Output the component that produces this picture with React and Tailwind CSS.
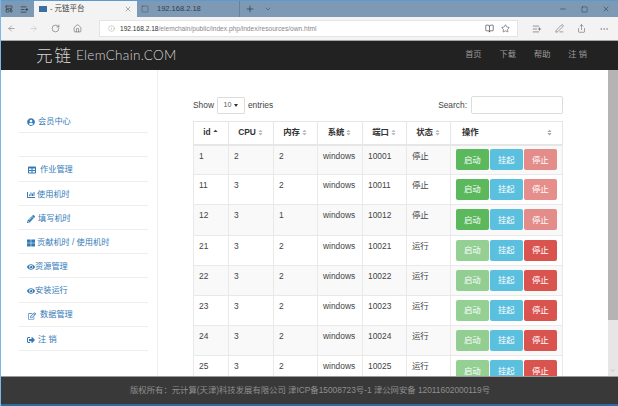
import React from "react";
import { ArrowLeft, ArrowRight, RotateCw, Home, Info, BookOpen, Star, PenLine, Share, MoreHorizontal, Plus, ChevronDown, X, Minus, Square, ListPlus, LayoutTemplate } from "lucide-react";
import { FaUserCircle, FaTable, FaChartBar, FaPencilAlt, FaThLarge, FaEye, FaRegEdit, FaSignOutAlt, FaSort, FaSortUp } from "react-icons/fa";

const sans = "font-['Liberation_Sans','Noto_Sans_CJK_SC',sans-serif]";

const menu = [
  { icon: FaTable, label: "作业管理", cls: "ml-[1px] mr-[4px]" },
  { icon: FaChartBar, label: "使用机时", cls: "mr-[2px]" },
  { icon: FaPencilAlt, label: "填写机时", cls: "mr-[3px]" },
  { icon: FaThLarge, label: "贡献机时 / 使用机时", cls: "mr-[2px]" },
  { icon: FaEye, label: "资源管理", cls: "" },
  { icon: FaEye, label: "安装运行", cls: "" },
  { icon: FaRegEdit, label: "数据管理", cls: "ml-[1px] mr-[4px]" },
  { icon: FaSignOutAlt, label: "注 销", cls: "mr-[3px]" },
];

const rows = [
  ["1", "2", "2", "10001", "停止", false],
  ["11", "3", "2", "10011", "停止", false],
  ["12", "3", "1", "10012", "停止", false],
  ["21", "3", "2", "10021", "运行", true],
  ["22", "3", "2", "10022", "运行", true],
  ["23", "3", "2", "10023", "运行", true],
  ["24", "3", "2", "10024", "运行", true],
  ["25", "3", "2", "10025", "运行", true],
];

const heads = [
  ["id", "w-[35px]", true],
  ["CPU", "w-[45px]"],
  ["内存", "w-[44px]"],
  ["系统", "w-[45px]"],
  ["端口", "w-[44px]"],
  ["状态", "w-[44px]"],
];

const cell = "border border-[#e9e9e9] px-[5px] pt-[4px] align-top";

function Btn({ color, dim, children }) {
  return (
    <span className={`flex h-[21px] w-[32.5px] items-center justify-center rounded-[2px] text-[8.4px] text-white ${color} ${dim ? "opacity-65" : ""}`}>
      {children}
    </span>
  );
}

export default function App() {
  return (
    <div className={`flex h-[406px] w-[618px] flex-col overflow-hidden border-l border-l-[#7ab6e6] bg-white ${sans}`}>
      {/* tab strip */}
      <div className="flex h-[17px] shrink-0 items-end border-t border-t-[#5c9bd1] bg-[#7e99b3] text-[#333]">
        <div className="flex h-full w-[33px] items-center gap-[7px] pl-[4px]">
          <LayoutTemplate size={8} strokeWidth={1.6} className="text-[#222]" />
          <ListPlus size={9} strokeWidth={1.6} className="text-[#222]" />
        </div>
        <div className="flex h-[16px] w-[103px] items-center bg-[#f3f3f3] pl-[5px] pr-[5px] text-[7.5px]">
          <span className="mr-[3px] h-[6px] w-[8px] bg-[#3a6ea5]" />
          <span className="flex-1 text-[#444]">- 元链平台</span>
          <X size={8} strokeWidth={1.4} className="text-[#555]" />
        </div>
        <div className="flex h-[16px] w-[103px] items-center border-r border-r-[#66829c] pl-[3px] text-[7.5px] text-[#2e3f4f]">
          <Square size={8} strokeWidth={1.2} className="mr-[8px] ml-[1px] text-[#2e3f4f]" />
          <span>192.168.2.18</span>
        </div>
        <div className="flex h-[16px] items-center gap-[9px] pl-[5px]">
          <Plus size={10} strokeWidth={1.5} className="text-[#1e2a36]" />
          <ChevronDown size={8} strokeWidth={1.5} className="text-[#33475a]" />
        </div>
        <div className="ml-auto flex h-[16px] items-center gap-[14px] pr-[8px] text-[#1e2a36]">
          <Minus size={8} strokeWidth={1.4} />
          <Square size={7} strokeWidth={1.4} />
          <X size={8} strokeWidth={1.4} />
        </div>
      </div>

      {/* browser toolbar */}
      <div className="flex h-[23px] shrink-0 items-center bg-[#f3f3f3] text-[#666]">
        <div className="flex w-[98px] items-center gap-[13px] pl-[6px]">
          <ArrowLeft size={9} strokeWidth={1.4} className="text-[#666]" />
          <ArrowRight size={9} strokeWidth={1.4} className="text-[#bbb]" />
          <RotateCw size={9} strokeWidth={1.4} className="text-[#555]" />
          <Home size={9} strokeWidth={1.4} className="text-[#555]" />
        </div>
        <div className="flex h-[17px] w-[419px] items-center border border-[#e4e4e4] bg-white pl-[8px] pr-[7px]">
          <Info size={7} strokeWidth={1.2} className="mr-[5px] text-[#888]" />
          <span className="text-[6.6px] text-[#333]">192.168.2.18</span>
          <span className="text-[6.6px] text-[#888]">/elemchain/public/index.php/index/resources/own.html</span>
          <BookOpen size={9} strokeWidth={1.6} className="ml-auto mr-[7px] text-[#333]" />
          <Star size={9} strokeWidth={1.4} className="text-[#333]" />
        </div>
        <div className="flex items-center gap-[13px] pl-[14px]">
          <ListPlus size={10} strokeWidth={1.3} className="text-[#444]" />
          <PenLine size={9} strokeWidth={1.3} className="text-[#444]" />
          <Share size={9} strokeWidth={1.3} className="text-[#444]" />
          <MoreHorizontal size={10} strokeWidth={1.3} className="text-[#777]" />
        </div>
      </div>

      {/* site nav */}
      <div className="flex h-[30px] shrink-0 items-center border-t border-t-[#a8a8a8] bg-[#222222] pl-[35px]">
        <span className="flex items-center text-[#d4d4d4]">
          <span className="w-[40px] text-[16.5px] font-light tracking-[2px] font-['Noto_Sans_CJK_SC',sans-serif]">元链</span>
          <span className="text-[13.5px] font-['Lato',sans-serif] font-light tracking-[0.3px]">ElemChain.COM</span>
        </span>
        <div className="ml-auto flex gap-[18px] pr-[31px] text-[8.2px] text-[#9d9d9d]">
          <span>首页</span>
          <span>下载</span>
          <span>帮助</span>
          <span>注 销</span>
        </div>
      </div>

      {/* page */}
      <div className="flex min-h-0 flex-1 overflow-hidden">
        <aside className="w-[157px] shrink-0 border-r border-r-[#eeeeee] pl-[18px] pr-[9px] pt-[39px] text-[#337ab7]">
          <div className="flex h-[24.2px] items-center border-b border-b-[#eeeeee] pl-[8px] pt-[3px] text-[8.2px]">
            <FaUserCircle size={8} className="mr-[3px]" />
            会员中心
          </div>
          <div className="h-[24.2px] border-b border-b-[#eeeeee]" />
          {menu.map((m) => (
            <div key={m.label} className="flex h-[24.2px] items-center border-b border-b-[#eeeeee] pl-[8px] pt-[3px] text-[8.2px]">
              <m.icon size={8} className={`shrink-0 ${m.cls}`} />
              {m.label}
            </div>
          ))}
        </aside>

        <main className="min-w-0 flex-1 pl-[35px] pr-[45px] pt-[26px] text-[8.4px] text-[#444]">
          <div className="flex h-[18px] items-center justify-between">
            <div className="flex items-center">
              <span>Show</span>
              <span className="mx-[3px] flex h-[17px] w-[28px] items-center justify-center gap-[3px] rounded-[1px] border border-[#dddddd] text-[7px] text-[#555]">
                10
                <span className="h-0 w-0 border-x-[2.5px] border-t-[3px] border-x-transparent border-t-[#333]" />
              </span>
              <span>entries</span>
            </div>
            <div className="flex items-center">
              <span className="mr-[4px]">Search:</span>
              <span className="h-[18px] w-[92px] rounded-[2px] border border-[#dddddd] bg-white" />
            </div>
          </div>

          <table className="mt-[7px] w-[370px] table-fixed border-collapse">
            <thead>
              <tr className="h-[23px]">
                {heads.map(([h, w, active]) => (
                  <th key={h} className={`${w} border border-[#e6e6e6] border-b-2 p-0 text-center text-[8.4px] font-bold text-[#333]`}>
                    <span className="inline-flex items-center gap-[1px]">
                      {h}
                      {active ? <FaSortUp size={7} className="text-[#444]" /> : <FaSort size={7} className="text-[#bbbbbb]" />}
                    </span>
                  </th>
                ))}
                <th className="border border-[#e6e6e6] border-b-2 p-0 text-[8.4px] font-bold text-[#333]">
                  <span className="flex items-center justify-between pl-[11px] pr-[9px]">
                    操作
                    <FaSort size={7} className="text-[#aaaaaa]" />
                  </span>
                </th>
              </tr>
            </thead>
            <tbody>
              {rows.map(([id, cpu, mem, port, state, running], i) => (
                <tr key={id} className={`h-[30.2px] ${i % 2 === 0 ? "bg-[#f9f9f9]" : "bg-white"}`}>
                  <td className={cell}>{id}</td>
                  <td className={cell}>{cpu}</td>
                  <td className={cell}>{mem}</td>
                  <td className={cell}>windows</td>
                  <td className={cell}>{port}</td>
                  <td className={cell}>{state}</td>
                  <td className="border border-[#e9e9e9] pl-[5px] align-middle">
                    <div className="flex gap-[1.5px]">
                      <Btn color="bg-[#5cb85c]" dim={running}>启动</Btn>
                      <Btn color="bg-[#5bc0de]">挂起</Btn>
                      <Btn color="bg-[#d9534f]" dim={!running}>停止</Btn>
                    </div>
                  </td>
                </tr>
              ))}
            </tbody>
          </table>
        </main>

        {/* page scrollbar */}
        <div className="flex w-[10px] shrink-0 flex-col bg-[#e6e6e6]">
          <div className="h-[250px] bg-[#b4b4b4]" />
          <ChevronDown size={7} strokeWidth={1.5} className="mt-auto mb-[2px] ml-[1px] text-[#999]" />
        </div>
      </div>

      {/* footer */}
      <div className="flex h-[30px] shrink-0 items-center justify-center border-t border-t-[#9a9a9a] border-b-2 border-b-[#2f6a9f] bg-[#393939] pl-[1px] text-[8.35px] text-[#8f8f8f]">
        版权所有：元计算(天津)科技发展有限公司 津ICP备15008723号-1 津公网安备 12011602000119号
      </div>
    </div>
  );
}
